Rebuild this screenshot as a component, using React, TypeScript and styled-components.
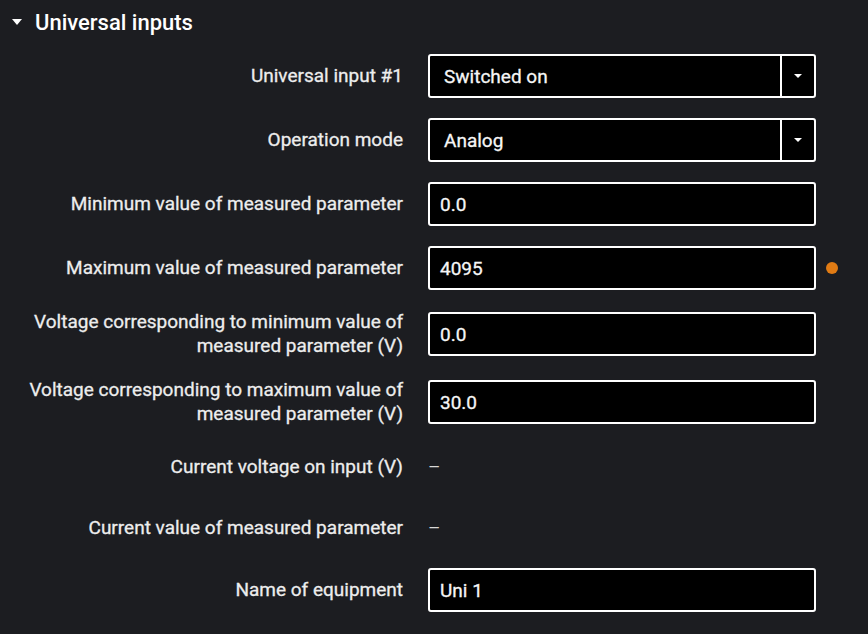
import { Fragment } from "react";
import styled, { createGlobalStyle } from "styled-components";

const GlobalStyle = createGlobalStyle`
  html, body {
    margin: 0;
    padding: 0;
    background: #1c1d21;
  }
  body {
    font-family: Roboto, "Liberation Sans", sans-serif;
    color: #ececec;
  }
`;

const Panel = styled.section`
  width: 868px;
  height: 634px;
  background: #1c1d21;
  overflow: hidden;
`;

const Header = styled.div`
  display: flex;
  align-items: center;
  gap: 13px;
  height: 44px;
  padding-left: 12px;
  font-size: 22px;
  font-weight: 500;
  color: #ffffff;
`;

const Caret = styled.span<{ $size: number }>`
  width: 0;
  height: 0;
  border-left: ${(p) => p.$size}px solid transparent;
  border-right: ${(p) => p.$size}px solid transparent;
  border-top: ${(p) => Math.round(p.$size * 1.1)}px solid #ffffff;
`;

const Form = styled.div`
  display: grid;
  grid-template-columns: 383px 1fr;
  column-gap: 25px;
  row-gap: 20px;
  padding: 10px 0 0 20px;
  align-items: center;
`;

const Label = styled.div<{ $h: number }>`
  min-height: ${(p) => p.$h}px;
  display: flex;
  align-items: center;
  justify-content: flex-end;
  text-align: right;
  font-size: 19px;
  font-weight: 400;
  line-height: 24px;
  color: #ededed;
  -webkit-text-stroke: 0.3px currentColor;
`;

const Control = styled.div`
  display: flex;
  align-items: center;
  gap: 10px;
`;

const Field = styled.div`
  box-sizing: border-box;
  width: 388px;
  height: 44px;
  display: flex;
  align-items: center;
  background: #000000;
  border: 2px solid #ffffff;
  border-radius: 3px;
  overflow: hidden;
`;

const FieldText = styled.div<{ $pad: number }>`
  flex: 1;
  padding-left: ${(p) => p.$pad}px;
  font-size: 19px;
  font-weight: 400;
  color: #f6f6f6;
  -webkit-text-stroke: 0.3px currentColor;
`;

const DropButton = styled.div`
  width: 32px;
  height: 100%;
  border-left: 2px solid #ffffff;
  display: flex;
  align-items: center;
  justify-content: center;
`;

const ReadOnly = styled.div`
  font-size: 19px;
  color: #d8d8d8;
`;

const Dot = styled.span`
  width: 12px;
  height: 12px;
  border-radius: 50%;
  background: #e07b14;
`;

type Row = {
  label: string;
  kind: "select" | "input" | "text";
  value: string;
  changed?: boolean;
  h?: number;
};

const rows: Row[] = [
  { label: "Universal input #1", kind: "select", value: "Switched on" },
  { label: "Operation mode", kind: "select", value: "Analog" },
  { label: "Minimum value of measured parameter", kind: "input", value: "0.0" },
  { label: "Maximum value of measured parameter", kind: "input", value: "4095", changed: true },
  { label: "Voltage corresponding to minimum value of measured parameter (V)", kind: "input", value: "0.0", h: 48 },
  { label: "Voltage corresponding to maximum value of measured parameter (V)", kind: "input", value: "30.0", h: 48 },
  { label: "Current voltage on input (V)", kind: "text", value: "–", h: 41 },
  { label: "Current value of measured parameter", kind: "text", value: "–", h: 41 },
  { label: "Name of equipment", kind: "input", value: "Uni 1" },
];

export default function App() {
  return (
    <>
      <GlobalStyle />
      <Panel>
        <Header>
          <Caret $size={5} />
          <span>Universal inputs</span>
        </Header>
        <Form>
          {rows.map((r) => (
            <Fragment key={r.label}>
              <Label $h={r.h ?? 44}>{r.label}</Label>
              <Control>
                {r.kind === "text" ? (
                  <ReadOnly>{r.value}</ReadOnly>
                ) : (
                  <Field>
                    <FieldText $pad={r.kind === "select" ? 14 : 10}>{r.value}</FieldText>
                    {r.kind === "select" && (
                      <DropButton>
                        <Caret $size={4} />
                      </DropButton>
                    )}
                  </Field>
                )}
                {r.changed && <Dot />}
              </Control>
            </Fragment>
          ))}
        </Form>
      </Panel>
    </>
  );
}
